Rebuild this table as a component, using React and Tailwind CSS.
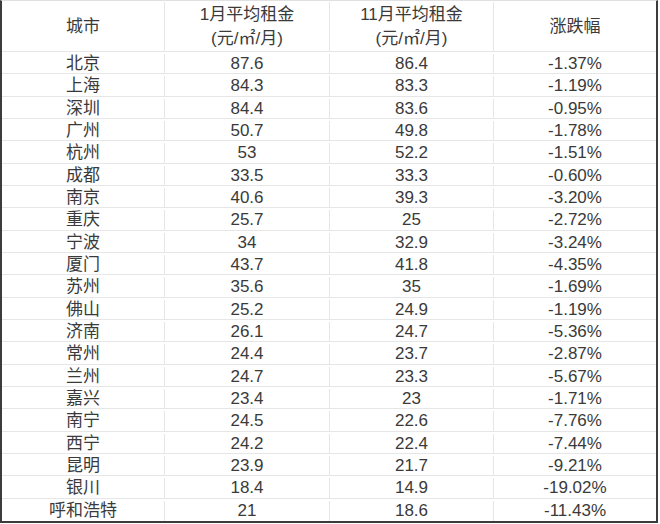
import React from "react";

const rows = [
  ["北京", "87.6", "86.4", "-1.37%"],
  ["上海", "84.3", "83.3", "-1.19%"],
  ["深圳", "84.4", "83.6", "-0.95%"],
  ["广州", "50.7", "49.8", "-1.78%"],
  ["杭州", "53", "52.2", "-1.51%"],
  ["成都", "33.5", "33.3", "-0.60%"],
  ["南京", "40.6", "39.3", "-3.20%"],
  ["重庆", "25.7", "25", "-2.72%"],
  ["宁波", "34", "32.9", "-3.24%"],
  ["厦门", "43.7", "41.8", "-4.35%"],
  ["苏州", "35.6", "35", "-1.69%"],
  ["佛山", "25.2", "24.9", "-1.19%"],
  ["济南", "26.1", "24.7", "-5.36%"],
  ["常州", "24.4", "23.7", "-2.87%"],
  ["兰州", "24.7", "23.3", "-5.67%"],
  ["嘉兴", "23.4", "23", "-1.71%"],
  ["南宁", "24.5", "22.6", "-7.76%"],
  ["西宁", "24.2", "22.4", "-7.44%"],
  ["昆明", "23.9", "21.7", "-9.21%"],
  ["银川", "18.4", "14.9", "-19.02%"],
  ["呼和浩特", "21", "18.6", "-11.43%"],
];

function Cell({ children, last }) {
  return (
    <div
      className={
        "flex items-center justify-center " +
        (last ? "" : "border-r border-[#e6e6e6]")
      }
    >
      {children}
    </div>
  );
}

export default function App() {
  return (
    <div className="w-[660px] h-[524px] bg-white">
      <div
        className="w-[658px] h-[523px] border-l-2 border-r-2 border-b-2 border-t border-l-[#3c3c3c] border-r-[#3c3c3c] border-b-[#3c3c3c] border-t-[#e0e0e0] text-[#3a3a3a] text-[17px] flex flex-col"
        style={{ fontFamily: '"Liberation Sans", "Noto Sans CJK SC", sans-serif' }}
      >
        <div className="grid grid-cols-[163px_165px_164px_162px] h-[51px] border-b border-[#e6e6e6] leading-[24px] pt-[1px]">
          <Cell>城市</Cell>
          <Cell>
            <div className="text-center">
              <div>1月平均租金</div>
              <div>(元/㎡/月)</div>
            </div>
          </Cell>
          <Cell>
            <div className="text-center">
              <div>11月平均租金</div>
              <div>(元/㎡/月)</div>
            </div>
          </Cell>
          <Cell last>涨跌幅</Cell>
        </div>
        {rows.map((r, i) => (
          <div
            key={i}
            className={
              "grid grid-cols-[163px_165px_164px_162px] h-[22.33px] leading-[19px] pt-[2px] " +
              (i < rows.length - 1 ? "border-b border-[#e6e6e6]" : "")
            }
          >
            <Cell>{r[0]}</Cell>
            <Cell>{r[1]}</Cell>
            <Cell>{r[2]}</Cell>
            <Cell last>{r[3]}</Cell>
          </div>
        ))}
      </div>
    </div>
  );
}
